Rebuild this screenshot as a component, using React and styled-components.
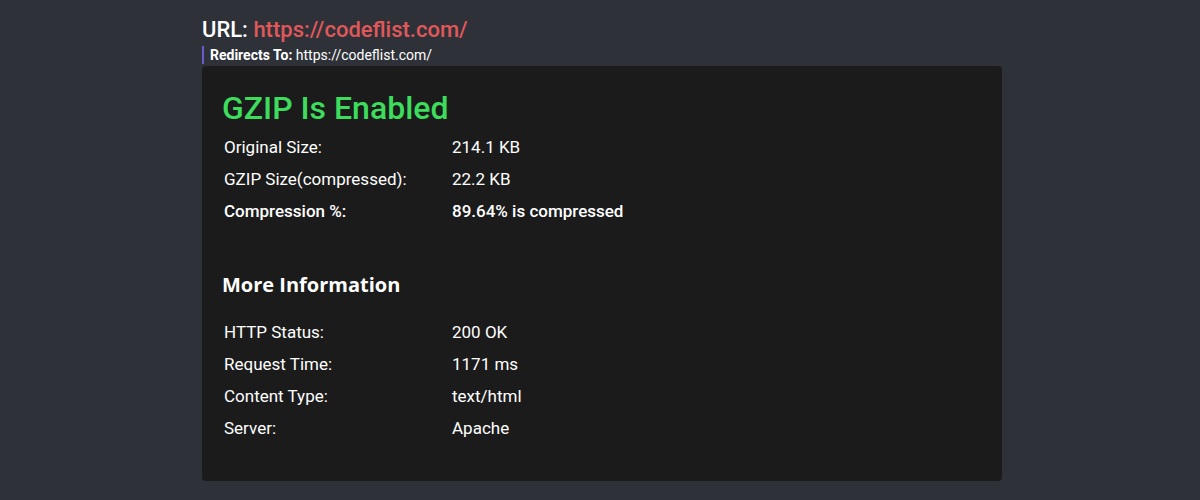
import React from "react";
import styled, { createGlobalStyle } from "styled-components";

const Global = createGlobalStyle`
  html, body { margin: 0; padding: 0; background: #2e3138; }
  body { font-family: Roboto, "Liberation Sans", sans-serif; color: #ffffff; }
`;

const Page = styled.div`
  width: 800px;
  box-sizing: content-box;
  padding-left: 4px;
  margin: 0 auto;
  padding-top: 16px;
  display: flex;
  flex-direction: column;
`;

const UrlTitle = styled.h1`
  margin: 0;
  font-size: 22px;
  font-weight: 500;
  line-height: 28px;
  color: #ffffff;
`;

const UrlLink = styled.span`
  color: #e0585a;
`;

const Redirect = styled.div`
  margin-top: 2px;
  border-left: 2px solid #6b5bd0;
  padding-left: 6px;
  font-size: 14px;
  line-height: 18px;
  color: #ffffff;
`;

const Card = styled.div`
  margin-top: 2px;
  background: #1b1b1b;
  border-radius: 4px;
  padding: 22px 20px 37px;
`;

const Heading = styled.h2`
  margin: 0 0 3px;
  font-size: 32px;
  font-weight: 500;
  line-height: 40px;
  color: #3ddc5c;
`;

const SubHeading = styled.h3`
  margin: 44px 0 17px;
  font-family: "Open Sans", sans-serif;
  font-size: 20px;
  font-weight: 700;
  line-height: 28px;
  color: #ffffff;
`;

const Table = styled.div`
  display: grid;
  grid-template-columns: 228px 1fr;
  grid-auto-rows: 32px;
  padding-left: 2px;
`;

const Cell = styled.div`
  font-size: 17px;
  line-height: 32px;
  font-weight: ${(p) => (p.$bold ? 500 : 400)};
  color: #ffffff;
`;

const Rows = ({ rows }) => (
  <Table>
    {rows.map(([k, v, b]) => (
      <React.Fragment key={k}>
        <Cell $bold={b}>{k}</Cell>
        <Cell $bold={b}>{v}</Cell>
      </React.Fragment>
    ))}
  </Table>
);

export default function App() {
  return (
    <>
      <Global />
      <Page>
        <UrlTitle>
          URL: <UrlLink>https://codeflist.com/</UrlLink>
        </UrlTitle>
        <Redirect>
          <b>Redirects To:</b> https://codeflist.com/
        </Redirect>
        <Card>
          <Heading>GZIP Is Enabled</Heading>
          <Rows
            rows={[
              ["Original Size:", "214.1 KB"],
              ["GZIP Size(compressed):", "22.2 KB"],
              ["Compression %:", "89.64% is compressed", true],
            ]}
          />
          <SubHeading>More Information</SubHeading>
          <Rows
            rows={[
              ["HTTP Status:", "200 OK"],
              ["Request Time:", "1171 ms"],
              ["Content Type:", "text/html"],
              ["Server:", "Apache"],
            ]}
          />
        </Card>
      </Page>
    </>
  );
}
